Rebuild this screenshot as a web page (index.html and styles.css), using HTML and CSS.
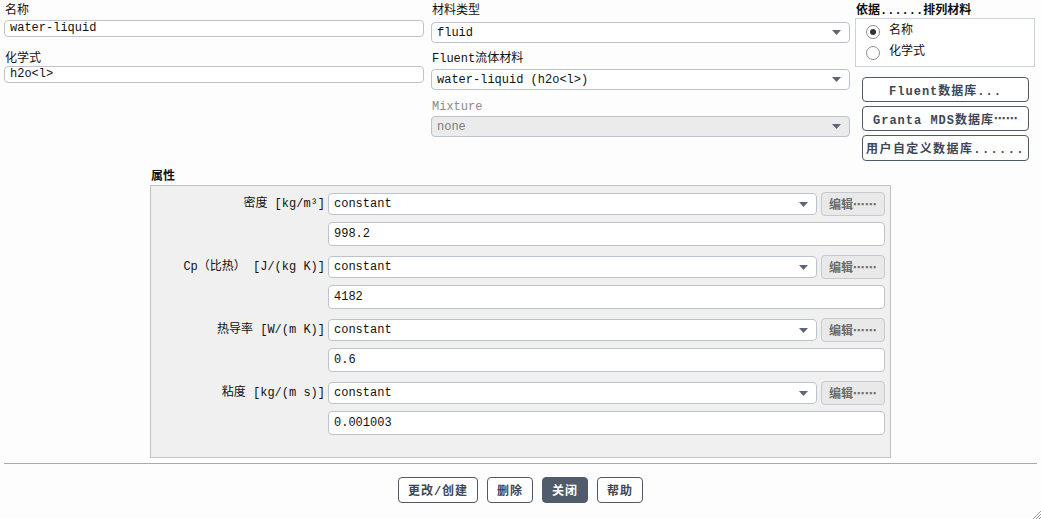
FILE: index.html
```html
<!DOCTYPE html>
<html lang="zh">
<head>
<meta charset="utf-8">
<title>材料</title>
<link rel="stylesheet" href="styles.css">
</head>
<body>
<div class="top">
  <div class="col-left">
    <div class="lbl l1">名称</div>
    <div class="txt">water-liquid</div>
    <div class="lbl l2">化学式</div>
    <div class="txt">h2o&lt;l&gt;</div>
  </div>
  <div class="col-mid">
    <div class="lbl m1">材料类型</div>
    <div class="sel"><span>fluid</span><svg class="arr" width="9" height="5" viewBox="0 0 9 5"><path d="M0 0h9L4.5 5z"/></svg></div>
    <div class="lbl m2">Fluent流体材料</div>
    <div class="sel"><span>water-liquid (h2o&lt;l&gt;)</span><svg class="arr" width="9" height="5" viewBox="0 0 9 5"><path d="M0 0h9L4.5 5z"/></svg></div>
    <div class="lbl m3 dim">Mixture</div>
    <div class="sel disabled"><span>none</span><svg class="arr" width="9" height="5" viewBox="0 0 9 5"><path d="M0 0h9L4.5 5z"/></svg></div>
  </div>
  <div class="col-right">
    <div class="rtitle">依据......排列材料</div>
    <div class="radiobox">
      <div class="radio"><span class="dot on"></span>名称</div>
      <div class="radio"><span class="dot"></span>化学式</div>
    </div>
    <div class="dbbtns">
      <div class="btn">Fluent数据库...</div>
      <div class="btn">Granta MDS数据库<span class="ell">⋯⋯</span></div>
      <div class="btn tight">用户自定义数据库......</div>
    </div>
  </div>
</div>

<div class="props">
  <div class="ptitle">属性</div>
  <div class="panel">
    <div class="prow">
      <div class="plbl">密度 [kg/m³]</div>
      <div class="pctl">
        <div class="sel psel"><span>constant</span><svg class="arr" width="9" height="5" viewBox="0 0 9 5"><path d="M0 0h9L4.5 5z"/></svg></div>
        <div class="edit">编辑<span class="ell">⋯⋯</span></div>
      </div>
      <div class="pval">998.2</div>
    </div>
    <div class="prow">
      <div class="plbl">Cp（比热） [J/(kg K)]</div>
      <div class="pctl">
        <div class="sel psel"><span>constant</span><svg class="arr" width="9" height="5" viewBox="0 0 9 5"><path d="M0 0h9L4.5 5z"/></svg></div>
        <div class="edit">编辑<span class="ell">⋯⋯</span></div>
      </div>
      <div class="pval">4182</div>
    </div>
    <div class="prow">
      <div class="plbl">热导率 [W/(m K)]</div>
      <div class="pctl">
        <div class="sel psel"><span>constant</span><svg class="arr" width="9" height="5" viewBox="0 0 9 5"><path d="M0 0h9L4.5 5z"/></svg></div>
        <div class="edit">编辑<span class="ell">⋯⋯</span></div>
      </div>
      <div class="pval">0.6</div>
    </div>
    <div class="prow">
      <div class="plbl">粘度 [kg/(m s)]</div>
      <div class="pctl">
        <div class="sel psel"><span>constant</span><svg class="arr" width="9" height="5" viewBox="0 0 9 5"><path d="M0 0h9L4.5 5z"/></svg></div>
        <div class="edit">编辑<span class="ell">⋯⋯</span></div>
      </div>
      <div class="pval">0.001003</div>
    </div>
  </div>
</div>

<div class="sep"></div>

<div class="actions">
  <div class="abtn">更改/创建</div>
  <div class="abtn">删除</div>
  <div class="abtn primary">关闭</div>
  <div class="abtn">帮助</div>
</div>

<svg class="grip" width="10" height="10" viewBox="0 0 10 10"><path d="M10 2L2 10M10 5L5 10M10 8L8 10" stroke="#9a9a9a" stroke-width="1"/></svg>
</body>
</html>
```

FILE: styles.css
```css
html, body {
  margin: 0;
  padding: 0;
  background: #fdfdfd;
}
body {
  width: 1041px;
  height: 519px;
  position: relative;
  overflow: hidden;
  font-family: "Liberation Mono", "Noto Sans CJK SC", monospace;
  font-size: 12px;
  color: #111;
}

.top {
  display: flex;
  padding-left: 4px;
  align-items: flex-start;
}
.col-left { width: 420px; }
.col-mid { width: 419px; margin-left: 7px; }
.col-right { width: 180px; margin-left: 5px; }

.lbl {
  line-height: 15px;
  padding-left: 1px;
  white-space: nowrap;
  box-sizing: border-box;
}
.l1 { height: 20px; padding-top: 4px; }
.l2 { height: 29px; padding-top: 15px; }
.m1 { height: 22px; padding-top: 4px; }
.m2 { height: 26px; padding-top: 9px; }
.m3 { height: 26px; padding-top: 10px; }
.dim { color: #8a8a8a; }

.txt {
  height: 17px;
  box-sizing: border-box;
  border: 1px solid #bcc3ce;
  border-radius: 4px;
  background: #fff;
  padding-left: 5px;
  line-height: 15px;
  white-space: nowrap;
}

.sel {
  height: 21px;
  box-sizing: border-box;
  border: 1px solid #bcc3ce;
  border-radius: 4px;
  background: #fff;
  padding: 0 8px 0 5px;
  display: flex;
  align-items: center;
  justify-content: space-between;
  white-space: nowrap;
}
.sel.disabled {
  background: #ebebeb;
  color: #7d7d7d;
}
.arr { fill: #5d6676; flex: none; }

.ell {
  font-family: "DejaVu Sans", "Noto Sans CJK SC", sans-serif;
  font-size: 11px;
  letter-spacing: 1px;
}

.rtitle {
  height: 18px;
  line-height: 15px;
  padding-top: 4px;
  box-sizing: border-box;
  font-weight: bold;
  padding-left: 1px;
}
.radiobox {
  height: 49px;
  box-sizing: border-box;
  border: 1px solid #cdd2da;
  background: #fff;
  padding-top: 2px;
}
.radio {
  height: 21px;
  display: flex;
  align-items: center;
  padding-left: 10px;
  line-height: 15px;
}
.dot {
  width: 14px;
  height: 14px;
  box-sizing: border-box;
  border: 1px solid #8f8f8f;
  border-radius: 50%;
  background: #fff;
  margin-right: 9px;
  display: flex;
  align-items: center;
  justify-content: center;
}
.dot.on::after {
  content: "";
  width: 6px;
  height: 6px;
  border-radius: 50%;
  background: #333;
}

.dbbtns {
  display: flex;
  flex-direction: column;
  gap: 4px;
  margin: 10px 6px 0 7px;
}
.btn {
  height: 25px;
  box-sizing: border-box;
  border: 1px solid #4f5a69;
  border-radius: 4px;
  background: #fff;
  color: #3e4756;
  font-weight: bold;
  letter-spacing: 1px;
  display: flex;
  align-items: center;
  justify-content: center;
  white-space: nowrap;
}
.btn.tight { height: 26px; letter-spacing: 1.4px; }

.props {
  margin-left: 150px;
  width: 741px;
  margin-top: 9px;
}
.ptitle {
  height: 15px;
  line-height: 15px;
  font-weight: bold;
  padding-left: 1px;
}
.panel {
  height: 273px;
  box-sizing: border-box;
  border: 1px solid #c3c3c3;
  background: #f0f0f0;
  padding: 7px 5px 0 0;
  display: flex;
  flex-direction: column;
  gap: 10px;
}
.prow {
  display: grid;
  grid-template-columns: 174px 1fr;
  column-gap: 3px;
  row-gap: 7px;
}
.plbl {
  text-align: right;
  line-height: 22px;
  white-space: nowrap;
}
.pctl {
  display: flex;
  gap: 4px;
  height: 22px;
}
.psel { height: 22px; flex: 1; }
.edit {
  width: 64px;
  height: 24px;
  margin: -1px 0;
  box-sizing: border-box;
  border: 1px solid #c6c9ce;
  border-radius: 4px;
  background: #e9e9e9;
  color: #6b6b6b;
  font-weight: bold;
  display: flex;
  align-items: center;
  justify-content: center;
  white-space: nowrap;
}
.pval {
  grid-column: 2;
  height: 24px;
  box-sizing: border-box;
  border: 1px solid #bcc3ce;
  border-radius: 4px;
  background: #fff;
  padding-left: 5px;
  line-height: 22px;
}

.sep {
  height: 1px;
  background: #a9a9a9;
  margin: 5px 4px 0 4px;
}

.actions {
  display: flex;
  justify-content: center;
  gap: 9px;
  margin-top: 13px;
}
.abtn {
  height: 26px;
  box-sizing: border-box;
  padding: 0 9px;
  border: 1px solid #4f5a69;
  border-radius: 4px;
  background: #fff;
  color: #3e4756;
  font-weight: bold;
  letter-spacing: 1px;
  display: flex;
  align-items: center;
  justify-content: center;
  white-space: nowrap;
}
.abtn.primary {
  background: #505c6b;
  color: #fff;
  border-color: #505c6b;
}

.grip {
  position: absolute;
  right: 0;
  bottom: 0;
}
```
